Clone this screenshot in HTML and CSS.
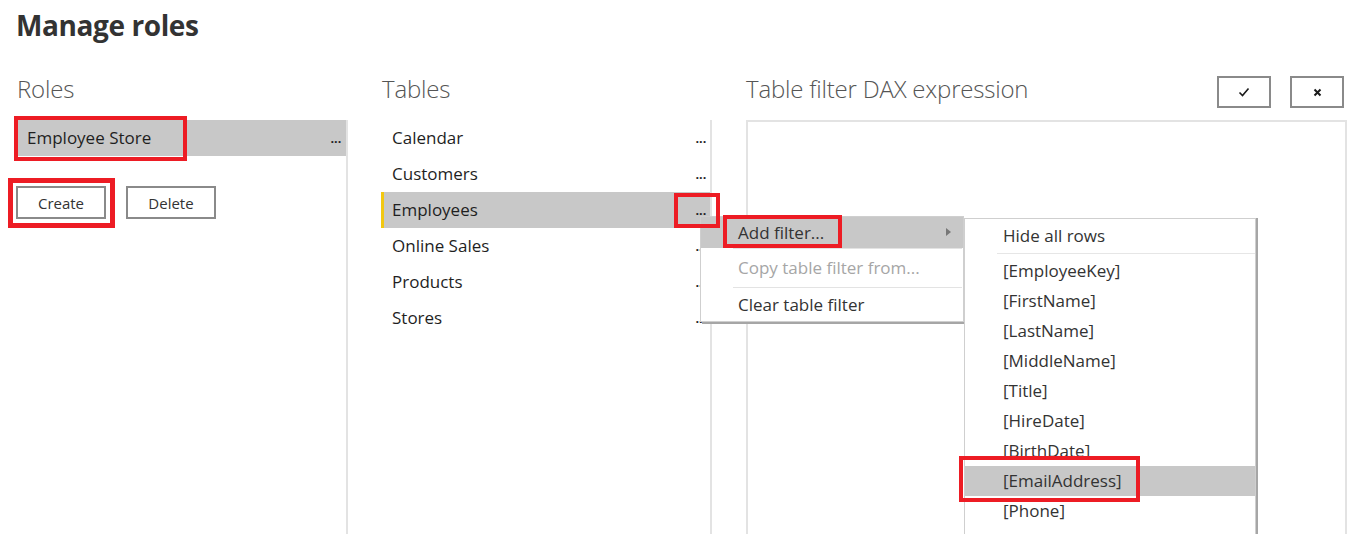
FILE: index.html
```html
<!DOCTYPE html>
<html>
<head>
<meta charset="utf-8">
<link rel="stylesheet" href="styles.css">
</head>
<body>
<div class="page">
  <h1 class="title">Manage roles</h1>
  <div class="main">
    <section class="col roles">
      <h2 class="col-head">Roles</h2>
      <div class="panel roles-panel">
        <div class="row selected"><span>Employee Store</span><span class="dots">...</span></div>
        <div class="btns">
          <button class="btn">Create</button>
          <button class="btn">Delete</button>
        </div>
      </div>
    </section>
    <section class="col tables">
      <h2 class="col-head">Tables</h2>
      <div class="panel tables-panel">
        <div class="trow"><span>Calendar</span><span class="dots">...</span></div>
        <div class="trow"><span>Customers</span><span class="dots">...</span></div>
        <div class="trow active"><span>Employees</span><span class="dots">...</span></div>
        <div class="trow"><span>Online Sales</span><span class="dots">...</span></div>
        <div class="trow"><span>Products</span><span class="dots">...</span></div>
        <div class="trow"><span>Stores</span><span class="dots">...</span></div>
      </div>
    </section>
    <section class="col dax">
      <div class="dax-head">
        <h2 class="col-head">Table filter DAX expression</h2>
        <div class="icon-btns">
          <button class="ibtn" aria-label="Apply"><svg width="12" height="10" viewBox="0 0 12 10"><path d="M1.5 5.5 L4.5 8.5 L10.5 1.5" fill="none" stroke="#1a1a1a" stroke-width="1.6"/></svg></button>
          <button class="ibtn" aria-label="Cancel"><svg width="9" height="9" viewBox="0 0 9 9"><path d="M1.5 1.5 L7.5 7.5 M7.5 1.5 L1.5 7.5" fill="none" stroke="#1a1a1a" stroke-width="2"/></svg></button>
        </div>
      </div>
      <div class="dax-box"></div>
    </section>
  </div>

  <div class="menu">
    <div class="mitem hl"><span>Add filter...</span><svg class="arrow" width="5" height="8" viewBox="0 0 5 8"><path d="M0 0 L5 4 L0 8 Z" fill="#777"/></svg></div>
    <div class="msep"></div>
    <div class="mitem disabled tall">Copy table filter from...</div>
    <div class="msep"></div>
    <div class="mitem last">Clear table filter</div>
  </div>

  <div class="submenu">
    <div class="sitem first">Hide all rows</div>
    <div class="ssep"></div>
    <div class="sitem">[EmployeeKey]</div>
    <div class="sitem">[FirstName]</div>
    <div class="sitem">[LastName]</div>
    <div class="sitem">[MiddleName]</div>
    <div class="sitem">[Title]</div>
    <div class="sitem">[HireDate]</div>
    <div class="sitem">[BirthDate]</div>
    <div class="sitem hl">[EmailAddress]</div>
    <div class="sitem">[Phone]</div>
  </div>

  <div class="mark mark-role"></div>
  <div class="mark mark-create"></div>
  <div class="mark mark-dots"></div>
  <div class="mark mark-add"></div>
  <div class="mark mark-email"></div>
</div>
</body>
</html>
```

FILE: styles.css
```css
* { box-sizing: border-box; }
html, body { margin: 0; padding: 0; background: #fff; }
body {
  width: 1358px;
  height: 534px;
  overflow: hidden;
  font-family: "Open Sans", "Noto Sans", "Liberation Sans", sans-serif;
  color: #1f1f1f;
}
.page { position: relative; width: 1358px; height: 534px; }

.title {
  margin: 0;
  padding: 7px 0 0 16px;
  font-size: 28px;
  line-height: 36px;
  font-weight: 700;
  color: #333;
  letter-spacing: -0.4px;
}

.main { display: flex; margin-top: 30px; }
.col { display: flex; flex-direction: column; }
.col-head {
  margin: 0;
  height: 47px;
  font-size: 24px;
  line-height: 31px;
  font-weight: 300;
  color: #555;
  letter-spacing: -0.2px;
}

.roles { width: 348px; }
.roles .col-head { padding-left: 17px; }
.panel {
  height: 420px;
  border-right: 2px solid #e3e3e3;
}
.roles-panel { padding-left: 16px; }
.row {
  display: flex;
  justify-content: space-between;
  align-items: center;
  height: 36px;
  margin-left: 2px;
  padding: 0 5px 2px 9px;
  font-size: 17px;
}
.row.selected { background: #c8c8c8; }
.dots { font-size: 15px; font-weight: 600; letter-spacing: -0.5px; }

.btns { display: flex; gap: 20px; margin-top: 30px; }
.btn {
  width: 90px;
  height: 33px;
  border: 2px solid #8a8a8a;
  background: #fff;
  font-family: inherit;
  font-size: 15px;
  color: #333;
  padding: 0;
}

.tables { width: 364px; }
.tables .col-head { padding-left: 34px; }
.tables-panel { padding-left: 33px; }
.trow {
  display: flex;
  justify-content: space-between;
  align-items: center;
  height: 36px;
  border-left: 3px solid transparent;
  padding: 0 4px 2px 8px;
  font-size: 17px;
}
.trow.active { background: #c8c8c8; border-left-color: #f2c811; }

.dax { width: 601px; margin-left: 34px; }
.dax-head { display: flex; justify-content: space-between; align-items: flex-start; height: 47px; }
.icon-btns { display: flex; gap: 19px; margin-top: 3px; margin-right: 3px; }
.ibtn {
  width: 54px;
  height: 32px;
  border: 2px solid #8a8a8a;
  background: #fff;
  padding: 0;
  display: flex;
  align-items: center;
  justify-content: center;
}
.dax-box {
  height: 420px;
  border: 2px solid #e3e3e3;
  border-bottom: none;
}

.menu {
  position: absolute;
  left: 700px;
  top: 216px;
  width: 264px;
  background: #fff;
  border: 1px solid #cfcfcf;
  box-shadow: 2px 2px 0 #a6a6a6;
  font-size: 17px;
}
.mitem {
  display: flex;
  align-items: center;
  justify-content: space-between;
  height: 31px;
  padding: 0 12px 1px 37px;
  color: #333;
}
.mitem.hl { background: #c8c8c8; }
.mitem.tall { height: 38px; }
.mitem.last { height: 33px; }
.mitem.disabled { color: #a6a6a6; }
.msep { height: 1px; background: #e3e3e3; margin-left: 32px; margin-right: 1px; }

.submenu {
  position: absolute;
  left: 964px;
  top: 218px;
  width: 292px;
  height: 330px;
  background: #fff;
  border: 1px solid #cfcfcf;
  border-bottom: none;
  box-shadow: 2px 0 0 #a6a6a6;
  font-size: 17px;
}
.sitem {
  height: 30px;
  line-height: 29px;
  padding-left: 38px;
  color: #333;
}
.sitem.first { height: 34px; line-height: 34px; }
.sitem.hl { background: #c8c8c8; }
.ssep { height: 1px; background: #e6e6e6; margin: 0 0 2px 32px; }

.mark {
  position: absolute;
  border: 4px solid #ed1c24;
}
.mark-role { left: 14px; top: 116px; width: 173px; height: 45px; }
.mark-create { left: 8px; top: 178px; width: 107px; height: 50px; border-width: 5px; }
.mark-dots { left: 674px; top: 193px; width: 46px; height: 35px; }
.mark-add { left: 723px; top: 215px; width: 119px; height: 33px; }
.mark-email { left: 959px; top: 456px; width: 181px; height: 46px; }
```
